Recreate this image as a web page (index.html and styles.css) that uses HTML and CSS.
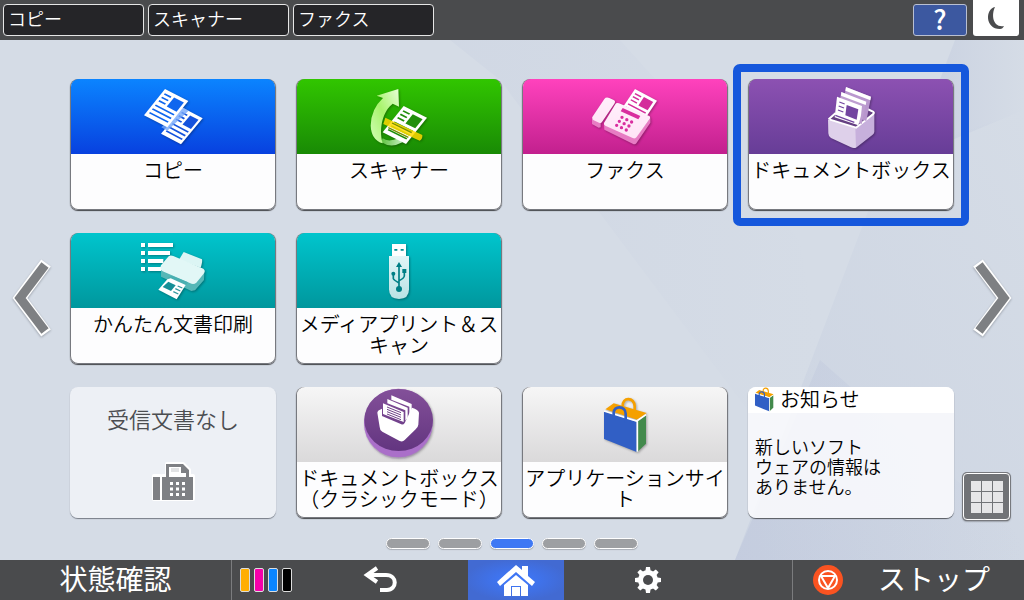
FILE: index.html
```html
<!DOCTYPE html>
<html lang="ja">
<head>
<meta charset="utf-8">
<title>ホーム</title>
<link rel="stylesheet" href="styles.css">
</head>
<body>
<svg class="defs" aria-hidden="true">
  <defs>
    <linearGradient id="arrowFill" x1="1" y1="0" x2="0" y2="1"><stop offset="0" stop-color="#e8ffd8"/><stop offset=".5" stop-color="#a8f36c"/><stop offset="1" stop-color="#d3ffb8"/></linearGradient>
    <linearGradient id="arrowTail" x1="0" y1="0" x2="1" y2="0"><stop offset="0" stop-color="#5cc03c"/><stop offset="1" stop-color="#c4eec0"/></linearGradient>
    <linearGradient id="faxFill" x1="0" y1="0" x2="0" y2="1"><stop offset="0" stop-color="#fff0fb"/><stop offset="1" stop-color="#ffe3f6"/></linearGradient>
    <linearGradient id="boxDisc" x1="0" y1="0" x2="0" y2="1"><stop offset="0" stop-color="#835099"/><stop offset="1" stop-color="#633580"/></linearGradient>
    <linearGradient id="usbFill" x1="0" y1="0" x2="0" y2="1"><stop offset="0" stop-color="#e3f6f7"/><stop offset="1" stop-color="#b9e2e4"/></linearGradient>
    <linearGradient id="facetA" x1="0" y1="1" x2="1" y2="0"><stop offset="0" stop-color="#bac4da"/><stop offset="1" stop-color="#bac4da" stop-opacity="0"/></linearGradient>
    <linearGradient id="facetB" x1="0" y1="0" x2="1" y2="0"><stop offset="0" stop-color="#b9c2da"/><stop offset="1" stop-color="#b9c2da" stop-opacity="0"/></linearGradient>
    <g id="sheet">
      <path d="M0 0H100V100H0Z" fill="#fff"/>
      <path d="M10 14H38M10 27H38M10 40H38M10 57H90M10 71H90M10 85H90" stroke="currentColor" stroke-width="5"/>
      <path d="M48 10H90V45H48Z" fill="currentColor"/>
    </g>
    <g id="bag">
      <path d="M76 73 101 55 200 84 172 104Z" fill="#f5a000"/>
      <path d="M72 79 170 110V201L72 162Z" fill="#315fc5"/>
      <path d="M172 110 198 91V176L172 201Z" fill="#438a4c"/>
      <path d="M72 78 170 108 198 89M172 108V200" fill="none" stroke="#fff" stroke-width="5"/>
      <path d="M128 64C126 34 164 36 164 64V84" fill="none" stroke="#f5a000" stroke-width="8"/>
      <path d="M101 101V84C101 60 137 62 137 86V112" fill="none" stroke="#315fc5" stroke-width="8"/>
    </g>
  </defs>
</svg>

<header class="topbar">
  <nav class="shortcuts">
    <button class="shortcut">コピー</button>
    <button class="shortcut">スキャナー</button>
    <button class="shortcut">ファクス</button>
  </nav>
  <button class="help">?</button>
  <button class="sleep" aria-label="スリープ">
    <svg width="46" height="36" viewBox="0 0 46 36"><path d="M22 7C12 9 12 29 27 29C29 29 30 28 31 26C20 28 18 15 22 7Z" fill="#4a4b4d"/></svg>
  </button>
</header>

<main class="home">
  <svg class="backdrop" viewBox="0 0 1024 520" preserveAspectRatio="none" aria-hidden="true">
    <path d="M450 0H620L800 200 820 320 770 400 500 40Z" fill="url(#facetB)" opacity=".16"/>
    <path d="M955 0H1024V70L952 100L915 105Z" fill="url(#facetB)" opacity=".45"/>
    <path d="M1024 70 952 96 880 140 800 350 735 520H1024Z" fill="url(#facetA)" opacity=".35"/>
    <path d="M820 320 1024 500V520H735Z" fill="url(#facetB)" opacity=".4"/>
  </svg>

  <button class="arrow" aria-label="前へ">
    <svg width="50" height="88" viewBox="0 0 50 88"><path d="M38 7 12 42 38 77" fill="none" stroke="#fff" stroke-width="12"/><path d="M37 9 12 42 37 75" fill="none" stroke="#7e8083" stroke-width="9"/></svg>
  </button>

  <div class="center">
    <div class="tiles">
      <button class="tile">
        <span class="head blue"><svg class="icon" viewBox="-6 -3 270 225">
          <use href="#sheet" transform="matrix(.60 .32 -.65 .78 158 83)" color="#1553dd"/>
          <path d="M159 83 176 92 112 152 94 142Z" fill="#76a8fa" opacity=".8"/>
          <use href="#sheet" transform="matrix(.70 .36 -.63 .79 105 27)" color="#0f66ef"/>
        </svg></span>
        <span class="label">コピー</span>
      </button>
      <button class="tile">
        <span class="head green"><svg class="icon" viewBox="-3 -3 270 225">
          <path d="M83 175Q100 188 132 174L142 187Q108 206 78 186Z" fill="url(#arrowTail)"/>
          <path d="M130 27 132 80 113 71C86 92 70 140 83 190Q49 180 47 137Q48 87 84 54L65 47Z" fill="url(#arrowFill)"/>
          <use href="#sheet" transform="matrix(.70 .35 -.63 .79 146 78)" color="#218f0c"/>
          <path d="M91 113 202 165Q203 178 194 182L85 132Z" fill="#ffdb00" opacity=".85"/>
          <path d="M111 129 170 158M100 143 160 172" stroke="#768f00" stroke-width="4"/>
        </svg></span>
        <span class="label">スキャナー</span>
      </button>
      <button class="tile">
        <span class="head pink"><svg class="icon" viewBox="0 -3 270 225">
          <use href="#sheet" transform="matrix(.66 .35 -.48 .72 165 27)" color="#d42e9b"/>
          <path d="M36 116 62 127V142L56 143 36 132ZM72 133 165 175 211 114V128L169 190Q165 195 158 191L73 149Z" fill="#e77cc3"/>
          <path d="M37 111 73 57Q78 50 88 54L101 60Q108 63 103 71L66 126Q63 131 57 128L41 121Q35 118 37 111Z" fill="url(#faxFill)"/>
          <path d="M72 129 106 73Q109 67 117 70L206 107Q213 110 209 117L170 171Q166 178 158 174L76 137Q70 134 72 129Z" fill="url(#faxFill)"/>
          <path d="M128 84 181 108 175 118 122 94Z" fill="#d92e9f"/>
          <path d="M126 112 157 127M118 124 149 139M110 136 141 151" stroke="#d92e9f" stroke-width="10" stroke-linecap="round" stroke-dasharray="0 16"/>
        </svg></span>
        <span class="label">ファクス</span>
      </button>
      <button class="tile selected">
        <span class="head purple"><svg class="icon" viewBox="3 -3 270 225">
          <path d="M69 119 90 97 180 80 207 96 153 144Z" fill="#654083"/>
          <path d="M69 118 153 144V203Q145 206 138 202L78 174Q70 169 70 160Z" fill="#ded0ea"/>
          <path d="M151 144 208 96V156Q207 162 202 165L153 203Z" fill="#c7b0dc"/>
          <path d="M71 118 92 99M181 84 204 95Q209 98 204 103L153 143 75 119" fill="none" stroke="#fff" stroke-width="6" stroke-linejoin="round"/>
          <path d="M123 21 198 50 184 123 110 97Z" fill="#b997ce"/><path d="M123 21 198 50 196 61 121 32Z" fill="#fff"/>
          <path d="M109 36 184 65 170 132 96 105Z" fill="#bd9dd0"/><path d="M109 36 184 65 182 75 108 47Z" fill="#fff"/>
          <path d="M96 50 171 78Q170 108 160 136L89 112Z" fill="#fff"/>
          <path d="M103 66 119 72M101 78 117 84M99 90 115 96M91 106 148 127" stroke="#7345a0" stroke-width="4"/>
          <path d="M125 75 160 88 155 119 121 106Z" fill="#7345a0"/>
        </svg></span>
        <span class="label">ドキュメントボックス</span>
      </button>

      <button class="tile">
        <span class="head teal"><svg class="icon" viewBox="-6 -6 270 225">
          <path d="M33 30H45M33 54H45M33 78H45M33 102H45M54 30H129M54 54H120M54 78H100M54 102H98" stroke="#fff" stroke-width="12"/>
          <path d="M147 74 161 51 216 73Q218 80 212 98Z" fill="#dcf5f4"/>
          <path d="M93 99 193 144 223 108 222 135 195 166 184 168 93 125Z" fill="#55b7b7"/>
          <path d="M93 91 116 64Q121 59 130 63L220 101Q228 107 221 116L199 143Q191 150 181 145L98 109Q88 102 93 91Z" fill="#e2f7f6"/>
          <path d="M113 128 126 122 174 142 160 158Z" fill="#49afb1"/>
          <path d="M122 130 167 150 140 193 85 164 112 133Z" fill="#fff"/>
          <path d="M115 140 137 151 123 168 98 156Z" fill="#168f97"/>
          <path d="M143 153 157 159M136 161 151 168M130 170 145 177" stroke="#31979d" stroke-width="4"/>
        </svg></span>
        <span class="label">かんたん文書印刷</span>
      </button>
      <button class="tile">
        <span class="head teal"><svg class="icon" viewBox="-18 -6 270 225">
          <path d="M96 27H138V66H96Z" fill="#fff"/><path d="M103 42h9v5h-9ZM122 42h9v5h-9Z" fill="#008c91"/>
          <path d="M87 63H147V163Q147 192 117 192Q87 192 87 163Z" fill="url(#usbFill)"/>
          <path d="M117 91V161M100 116V131Q101 135 117 144M133 108V123Q132 130 117 137" fill="none" stroke="#007f85" stroke-width="5"/>
          <path d="M117 81 108 96H126ZM127 102H139V114H127Z" fill="#007f85"/><circle cx="100" cy="116" r="6" fill="#007f85"/><circle cx="117" cy="162" r="9" fill="#007f85"/>
        </svg></span>
        <span class="label">メディアプリント＆スキャン</span>
      </button>

      <button class="tile status">
        <span class="status-text">受信文書なし</span>
        <svg class="fax" width="44" height="42" viewBox="0 0 44 42"><path d="M3 15H9V38H3ZM12 15H16V3H32L38 9V15H42V38H12Z" fill="#fff" stroke="#fff" stroke-width="4" stroke-linejoin="round"/><path d="M2 16H9V39H2ZM11 16H15V3H32L38 9V16H42V39H11Z" fill="#7e8084"/><path d="M18 6H30V12H35V16H18Z" fill="#fff"/><path d="M20 8H28M20 10H28" stroke="#c5c7ca" stroke-width="1"/><path d="M19 22.500H34M19 28H34M19 33.500H34" stroke="#fff" stroke-width="3" stroke-dasharray="3 3"/></svg>
      </button>
      <button class="tile">
        <span class="head gray"><svg class="icon" viewBox="-3 6 270 225">
          <circle cx="130" cy="120" r="102" fill="#a37ac0" opacity=".25"/>
          <circle cx="130" cy="114" r="103" fill="#aa6fc9"/>
          <ellipse cx="131" cy="105" rx="103" ry="93" fill="url(#boxDisc)"/>
          <path d="M67 83Q67 76 81 71V93L139 118Q145 120 149 114L171 68Q190 74 192 83L190 119Q189 127 182 133L149 165Q143 172 134 168L82 140Q74 135 74 126Z" fill="#fff"/>
          <path d="M109 31 170 57V83L163 93V65L109 44ZM97 42 158 68V98L151 107V76L97 55ZM84 55 146 81V111L84 87Z" fill="#fff"/>
          <path d="M96 66 138 83M96 73 138 90M96 80 138 97M96 87 138 104" stroke="#704288" stroke-width="3"/>
        </svg></span>
        <span class="label">ドキュメントボックス（クラシックモード）</span>
      </button>
      <button class="tile">
        <span class="head gray"><svg class="icon" viewBox="0 6 270 225"><use href="#bag"/></svg></span>
        <span class="label">アプリケーションサイト</span>
      </button>
      <button class="tile news">
        <span class="news-title"><svg width="20" height="25" viewBox="66 34 136 172" aria-hidden="true"><use href="#bag"/></svg>お知らせ</span>
        <span class="news-text">新しいソフト
ウェアの情報は
ありません。</span>
      </button>
    </div>
    <div class="pages"><i></i><i></i><i class="current"></i><i></i><i></i></div>
  </div>

  <button class="arrow next" aria-label="次へ">
    <svg width="50" height="88" viewBox="0 0 50 88"><path d="M12 7 38 42 12 77" fill="none" stroke="#fff" stroke-width="12"/><path d="M13 9 38 42 13 75" fill="none" stroke="#7e8083" stroke-width="9"/></svg>
  </button>
  <button class="apps" aria-label="アプリ一覧">
    <svg width="32" height="32" viewBox="0 0 32 32"><path d="M0 0h10v10H0ZM11 0h10v10H11ZM22 0h10v10H22ZM0 11h10v10H0ZM11 11h10v10H11ZM22 11h10v10H22ZM0 22h10v10H0ZM11 22h10v10H11ZM22 22h10v10H22Z" fill="#e6e6e8"/></svg>
  </button>
</main>

<footer class="bottombar">
  <button class="check">状態確認</button>
  <span class="toner"><i class="y"></i><i class="m"></i><i class="c"></i><i class="k"></i></span>
  <button aria-label="戻る"><svg width="36" height="32" viewBox="0 0 36 32"><path d="M5 11H24C36 11 35 26 25 26H18" fill="none" stroke="#fff" stroke-width="4"/><path d="M15 4 5 11 15 18" fill="none" stroke="#fff" stroke-width="4"/></svg></button>
  <button class="go-home" aria-label="ホーム"><svg width="40" height="36" viewBox="0 0 40 36"><path d="M20 3 26 8V4H32V14L39 20 36 24 20 10 4 24 1 20Z" fill="#fff"/><path d="M20 13 32 23V34H25V24H15V34H8V23Z" fill="#fff"/><path d="M16 25H24V34H16Z" fill="#fff"/></svg></button>
  <button aria-label="設定"><svg width="28" height="28" viewBox="-14 -14 28 28"><g fill="#fff"><circle r="10"/><path id="tooth" d="M-2-13H2L4 0H-4Z"/><use href="#tooth" transform="rotate(45)"/><use href="#tooth" transform="rotate(90)"/><use href="#tooth" transform="rotate(135)"/><use href="#tooth" transform="rotate(180)"/><use href="#tooth" transform="rotate(225)"/><use href="#tooth" transform="rotate(270)"/><use href="#tooth" transform="rotate(315)"/></g><circle r="5" fill="#4a4b4d"/></svg></button>
  <span></span>
  <button class="stop"><svg width="32" height="32" viewBox="-16 -16 32 32"><circle r="15" fill="#fa5321"/><circle r="9" fill="none" stroke="#fff" stroke-width="2"/><path d="M-7-4H7L0 8Z" fill="#fa5321" stroke="#fff" stroke-width="2" stroke-linejoin="round"/></svg><span>ストップ</span></button>
</footer>
</body>
</html>
```

FILE: styles.css
```css
* { box-sizing: border-box; }
body {
  margin: 0;
  min-height: 100vh;
  display: flex;
  flex-direction: column;
  font-family: "Noto Sans CJK JP", "Liberation Sans", sans-serif;
  font-weight: 350;
  background: #d5dce6;
  color: #000;
}
button { border: 0; padding: 0; margin: 0; background: none; color: inherit; font: inherit; cursor: pointer; }
svg { display: block; flex: none; }
.defs { position: absolute; width: 0; height: 0; }

.topbar { display: flex; align-items: flex-start; height: 40px; padding: 0 5px 0 3px; background: #4a4b4d; }
.shortcuts { display: flex; gap: 4px; flex: 1; padding-top: 4px; }
.shortcut { width: 141px; height: 32px; padding: 0 4px 3px; border: 1px solid #e6e6e6; border-radius: 4px; background: #252528; color: #fff; font-size: 18px; line-height: 27px; text-align: left; }
.help { width: 54px; height: 32px; margin: 4px 6px 0 0; padding-bottom: 2px; border: 1px solid #b9bfd1; border-radius: 3px; background: #3c58a0; color: #fff; font-size: 27px; font-weight: 500; line-height: 28px; }
.sleep { background: #fff; border-radius: 0 0 3px 3px; }

.home { position: relative; flex: 1; display: grid; grid-template-columns: 70px minmax(0, 1fr) 70px; align-items: center; overflow: hidden; }
.backdrop { position: absolute; inset: 0; width: 100%; height: 100%; }
.arrow, .center { position: relative; }
.arrow { display: flex; align-items: center; padding-left: 8px; filter: drop-shadow(0 1px 1px #9aa0aa); }
.arrow.next { padding: 0 0 0 12px; }
.center { align-self: start; padding-top: 39px; }
.tiles { display: grid; grid-template-columns: repeat(4, minmax(0, 1fr)); grid-auto-rows: 131px; gap: 23px 20px; }
.tile { position: relative; display: flex; flex-direction: column; align-items: stretch; border-radius: 8px; background: #fdfdfe; box-shadow: inset 0 0 0 1px #77797f, 0 1px 1px #44464a; }
.tile:nth-child(7) { grid-column: 1; }
.selected::after { content: ""; position: absolute; inset: -15px -15px -16px; border: 8px solid #1557dc; border-radius: 7px; }
.head { display: flex; justify-content: center; height: 75px; margin: 0 1px; border-radius: 8px 8px 0 0; }
.icon { width: 90px; height: 75px; filter: drop-shadow(1px 1px 1px rgba(0, 0, 0, .3)); }
.blue { background: linear-gradient(#0b84ff, #0841df); }
.green { background: linear-gradient(#31c600, #198a05); }
.pink { background: linear-gradient(#ff42bd, #c2208e); }
.purple { background: linear-gradient(#8c51b2, #673d97); }
.teal { background: linear-gradient(#00c5cd, #00979d); }
.gray { background: linear-gradient(#f6f6f6, #dad9da); }
.label { padding: 5px 2px 0; font-size: 20px; line-height: 21px; text-align: center; }

.status { align-items: center; padding-top: 16px; gap: 28px; background: rgba(246, 248, 251, .7); box-shadow: 0 1px 1px #777c86; color: #4b4d51; font-size: 22px; line-height: 30px; }
.news { background: rgba(251, 252, 254, .85); text-align: left; box-shadow: 0 1px 1px #55585e; }
.news-title { display: flex; align-items: center; gap: 6px; padding: 0 6px 2px; border-radius: 8px 8px 0 0; background: #fff; font-size: 20px; line-height: 24px; height: 26px; }
.news-text { padding: 23px 7px 0; font-size: 18px; line-height: 20px; white-space: pre-line; }

.pages { display: flex; justify-content: center; gap: 8px; padding-top: 20px; }
.pages i { width: 44px; height: 11px; border: 1px solid #fff; border-radius: 6px; background: #9d9fa2; box-shadow: 0 1px 1px #aaaeb6; }
.pages .current { background: #3e78f4; }
.apps { position: absolute; right: 14px; bottom: 40px; display: grid; place-items: center; width: 47px; height: 47px; border: 1px solid #fff; border-radius: 4px; background: #717377; box-shadow: 0 0 0 1px #77797e, 0 1px 2px #333; }

.bottombar { display: grid; grid-template-columns: 232fr 60fr 176fr 96fr 168fr 60fr 232fr; height: 40px; background: #4a4b4d; color: #fff; }
.bottombar button { display: flex; align-items: center; justify-content: center; }
.bottombar .check { border-right: 1px solid #7b7c7e; padding-bottom: 4px; font-size: 28px; font-weight: 400; line-height: 36px; }
.toner { display: flex; align-items: center; gap: 4px; padding-left: 8px; }
.toner i { width: 10px; height: 24px; border: 1px solid #ddd; border-radius: 2px; }
.y { background: #ffae00; }
.m { background: #f500aa; }
.c { background: #0a85ff; }
.k { background: #000; }
.bottombar .go-home { background: radial-gradient(#3d79ff, #426ad2 75%); }
.bottombar .stop { justify-content: flex-start; gap: 34px; padding-left: 19px; border-left: 1px solid #7b7c7e; font-size: 28px; font-weight: 400; line-height: 36px; }
.stop span { padding-bottom: 4px; }
```
